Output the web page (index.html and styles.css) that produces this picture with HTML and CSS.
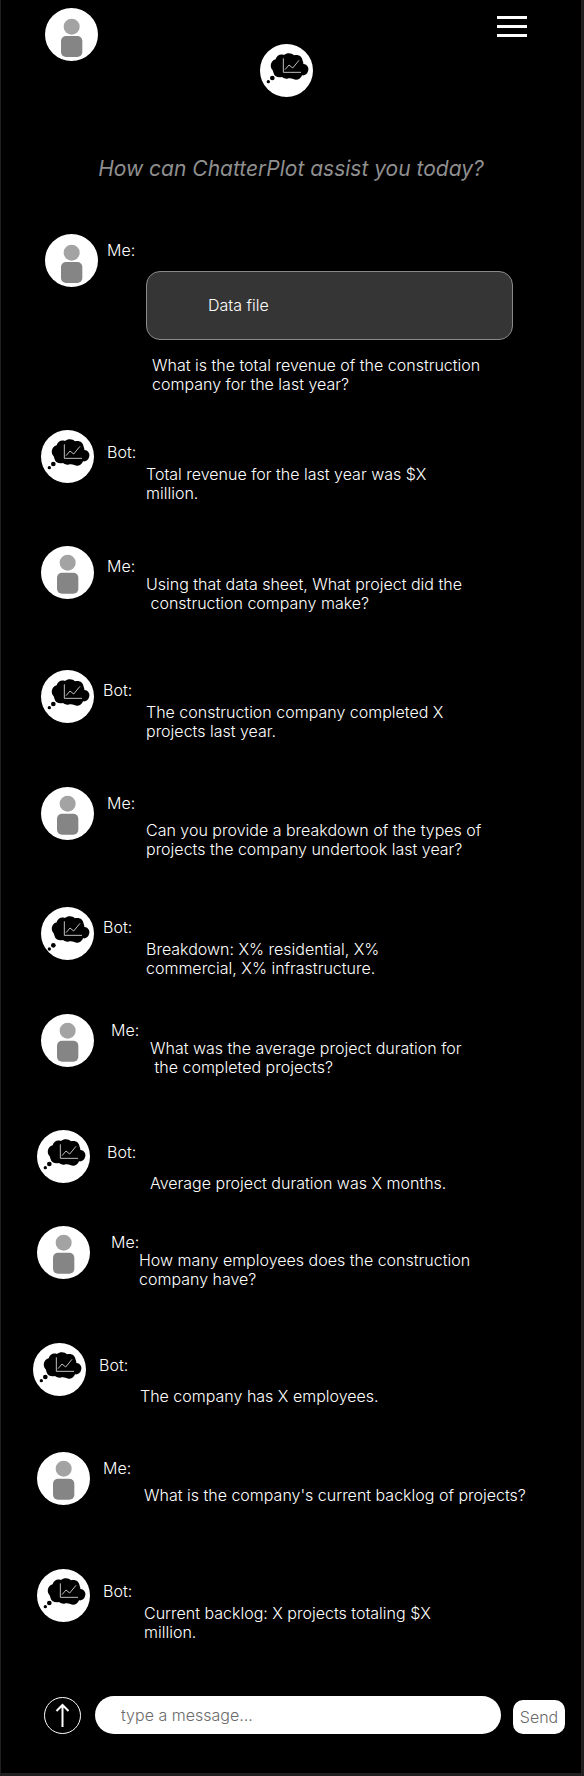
FILE: index.html
```html
<!DOCTYPE html>
<html lang="en">
<head>
<meta charset="utf-8">
<meta name="viewport" content="width=device-width, initial-scale=1">
<title>ChatterPlot</title>
<link rel="stylesheet" href="styles.css">
</head>
<body>
<svg class="sprite" aria-hidden="true">
  <symbol id="user" viewBox="0 0 159 159">
    <circle cx="79.5" cy="79.5" r="79.5" fill="#fff"/>
    <circle cx="80" cy="50" r="24" fill="#a3a3a3"/>
    <rect x="48" y="80" width="64" height="63" rx="15" fill="#858585"/>
  </symbol>
  <symbol id="user-low" viewBox="0 0 159 159">
    <circle cx="79.5" cy="79.5" r="79.5" fill="#fff"/>
    <circle cx="80" cy="56" r="24" fill="#a3a3a3"/>
    <rect x="48" y="84" width="64" height="63" rx="15" fill="#858585"/>
  </symbol>
  <symbol id="cloud" viewBox="0 0 159 159">
    <circle cx="79.5" cy="79.5" r="79.5" fill="#fff"/>
    <path d="M38 79C29 70 30 51 47 46C50 33 62 29 72 33C80 25 96 26 102 34C114 30 127 36 128 51C130 54 130 57 130 60C143 61 148 73 144 82C142 91 133 96 126 94C123 105 109 111 100 105C92 102 86 103 82 104C76 105 71 102 66 99C54 102 43 97 41 88Z" fill="#000"/>
    <path d="M70 43V85H123M75 77L87 63L98 72L117 49" fill="none" stroke="#e4e4e4" stroke-width="2.500"/>
  </symbol>
  <symbol id="bot" viewBox="0 0 159 159">
    <use href="#cloud"/>
    <circle cx="37" cy="102" r="7"/>
    <circle cx="25" cy="113" r="5"/>
  </symbol>
  <symbol id="bot-low" viewBox="0 0 159 159">
    <use href="#cloud"/>
    <circle cx="37" cy="115" r="7"/>
    <circle cx="25" cy="126" r="5"/>
  </symbol>
</svg>
<div class="page">
  <header class="header">
    <svg class="avatar" role="img" aria-label="Your profile"><use href="#user-low"/></svg>
    <svg class="avatar logo" role="img" aria-label="ChatterPlot"><use href="#bot"/></svg>
    <button class="menu" type="button" aria-label="Menu"><span></span><span></span><span></span></button>
  </header>
  <h1 class="title">How can ChatterPlot assist you today?</h1>
  <main class="chat">
    <article class="message in-xl top-s name-s text-m after-36">
      <svg class="avatar" aria-hidden="true"><use href="#user-low"/></svg>
      <div class="content">
        <h2 class="name">Me:</h2>
        <div class="file">Data file</div>
        <p class="text">What is the total revenue of the construction<br>company for the last year?</p>
      </div>
    </article>
    <article class="message in-l top-l name-m text-s drop-s after-43">
      <svg class="avatar" aria-hidden="true"><use href="#bot"/></svg>
      <div class="content">
        <h2 class="name">Bot:</h2>
        <p class="text">Total revenue for the last year was $X<br>million.</p>
      </div>
    </article>
    <article class="message in-l top-m name-m text-s after-57">
      <svg class="avatar" aria-hidden="true"><use href="#user"/></svg>
      <div class="content">
        <h2 class="name">Me:</h2>
        <p class="text">Using that data sheet, What project did the<br>&nbsp;construction company make?</p>
      </div>
    </article>
    <article class="message in-l top-m name-s text-s drop-s after-46">
      <svg class="avatar" aria-hidden="true"><use href="#bot"/></svg>
      <div class="content">
        <h2 class="name">Bot:</h2>
        <p class="text">The construction company completed X<br>projects last year.</p>
      </div>
    </article>
    <article class="message in-l top-s name-m text-s drop-m after-48">
      <svg class="avatar" aria-hidden="true"><use href="#user"/></svg>
      <div class="content">
        <h2 class="name">Me:</h2>
        <p class="text">Can you provide a breakdown of the types of<br>projects the company undertook last year?</p>
      </div>
    </article>
    <article class="message in-l top-m name-s text-s drop-s after-36">
      <svg class="avatar" aria-hidden="true"><use href="#bot-low"/></svg>
      <div class="content">
        <h2 class="name">Bot:</h2>
        <p class="text">Breakdown: X% residential, X%<br>commercial, X% infrastructure.</p>
      </div>
    </article>
    <article class="message in-l top-s name-l text-l after-53">
      <svg class="avatar" aria-hidden="true"><use href="#user"/></svg>
      <div class="content">
        <h2 class="name">Me:</h2>
        <p class="text">What was the average project duration for<br>&nbsp;the completed projects?</p>
      </div>
    </article>
    <article class="message in-m top-l name-l text-xl drop-l after-33">
      <svg class="avatar" aria-hidden="true"><use href="#bot"/></svg>
      <div class="content">
        <h2 class="name">Bot:</h2>
        <p class="text">Average project duration was X months.</p>
      </div>
    </article>
    <article class="message in-m top-s name-xl text-xs after-54">
      <svg class="avatar" aria-hidden="true"><use href="#user"/></svg>
      <div class="content">
        <h2 class="name">Me:</h2>
        <p class="text">How many employees does the construction<br>company have?</p>
      </div>
    </article>
    <article class="message in-s top-l name-m text-m drop-l after-46">
      <svg class="avatar" aria-hidden="true"><use href="#bot"/></svg>
      <div class="content">
        <h2 class="name">Bot:</h2>
        <p class="text">The company has X employees.</p>
      </div>
    </article>
    <article class="message in-m top-s name-m text-m drop-m after-64">
      <svg class="avatar" aria-hidden="true"><use href="#user"/></svg>
      <div class="content">
        <h2 class="name">Me:</h2>
        <p class="text">What is the company's current backlog of projects?</p>
      </div>
    </article>
    <article class="message in-m top-l name-m text-m drop-s after-54">
      <svg class="avatar" aria-hidden="true"><use href="#bot"/></svg>
      <div class="content">
        <h2 class="name">Bot:</h2>
        <p class="text">Current backlog: X projects totaling $X<br>million.</p>
      </div>
    </article>
  </main>
  <form class="composer">
    <button class="upload" type="button" aria-label="Upload a file">
      <svg viewBox="0 0 37 37" fill="none" stroke="#fff" aria-hidden="true">
        <circle cx="18.5" cy="18.5" r="18" stroke-width="1"/>
        <path d="M18.5 30V8M12.500 14L18.500 8L24.500 14" stroke-width="2"/>
      </svg>
    </button>
    <input class="field" type="text" placeholder="type a message..." aria-label="Message">
    <button class="send" type="submit">Send</button>
  </form>
</div>
</body>
</html>
```
FILE: styles.css
```css
* {
  box-sizing: border-box;
}

body {
  margin: 0;
  background: #000;
  color: #fff;
  font: 300 16px/19px Inter, "Liberation Sans", sans-serif;
}

h1, h2, p {
  margin: 0;
  font-size: inherit;
  font-weight: inherit;
}

button, input {
  margin: 0;
  padding: 0;
  border: 0;
  font: inherit;
}

.sprite {
  display: none;
}

.page {
  min-height: 100vh;
  padding-bottom: 39px;
  border: solid #211f20;
  border-width: 0 3px 3px 1px;
}

.avatar {
  display: block;
  flex: none;
  width: 53px;
  height: 53px;
}

.header {
  display: grid;
  grid-template-columns: 1fr auto 1fr;
  align-items: start;
  padding: 8px 54px 0 44px;
}

.logo {
  margin-top: 36px;
}

.menu {
  display: flex;
  flex-direction: column;
  justify-self: end;
  gap: 6px;
  width: 30px;
  padding-top: 8px;
  background: none;
}

.menu span {
  height: 3px;
  background: #fff;
}

.title {
  margin: 58px 0 51px;
  color: #8f8f8f;
  font-size: 21px;
  font-style: italic;
  font-weight: 400;
  line-height: 28px;
  text-align: center;
}

.message {
  display: flex;
  padding-right: 44px;
}

.content {
  flex: 1;
}

.name {
  margin: var(--name-top) 0 0 var(--name-gap);
  line-height: 16px;
}

.text {
  margin: var(--drop, 1px) 0 0 var(--text-gap);
}

.file {
  display: flex;
  align-items: center;
  height: 69px;
  margin: 13px 24px 16px 48px;
  padding-left: 61px;
  border: 1px solid #8a8a8a;
  border-radius: 14px;
  background: #353535;
}

/* Distance of a message from the page's edge */
.in-s { padding-left: 32px; }
.in-m { padding-left: 36px; }
.in-l { padding-left: 40px; }
.in-xl { padding-left: 44px; }

/* Distance of the sender's name from the avatar's top */
.top-s { --name-top: 8px; }
.top-m { --name-top: 12px; }
.top-l { --name-top: 14px; }

/* Distance of the sender's name from the avatar */
.name-s { --name-gap: 9px; }
.name-m { --name-gap: 13px; }
.name-l { --name-gap: 17px; }
.name-xl { --name-gap: 21px; }

/* Distance of the message text from the avatar */
.text-xs { --text-gap: 49px; }
.text-s { --text-gap: 52px; }
.text-m { --text-gap: 54px; }
.text-l { --text-gap: 56px; }
.text-xl { --text-gap: 60px; }

/* Distance of the message text below the name */
.drop-s { --drop: 5px; }
.drop-m { --drop: 10px; }
.drop-l { --drop: 14px; }

/* Space after a message */
.after-33 { margin-bottom: 33px; }
.after-36 { margin-bottom: 36px; }
.after-43 { margin-bottom: 43px; }
.after-46 { margin-bottom: 46px; }
.after-48 { margin-bottom: 48px; }
.after-53 { margin-bottom: 53px; }
.after-54 { margin-bottom: 54px; }
.after-57 { margin-bottom: 57px; }
.after-64 { margin-bottom: 64px; }

.composer {
  display: flex;
  align-items: flex-end;
  padding: 0 16px 0 43px;
}

.upload {
  width: 37px;
  height: 37px;
  margin-right: 14px;
  background: none;
}

.upload svg {
  display: block;
}

.field {
  flex: 1;
  min-width: 0;
  height: 38px;
  margin-right: 12px;
  padding: 0 26px;
  border-radius: 19px;
  background: #fff;
  color: #333;
}

.field::placeholder {
  color: #6b6b6b;
  opacity: 1;
}

.send {
  width: 52px;
  height: 34px;
  border-radius: 10px;
  background: #fff;
  color: #6b6b6b;
}
```
